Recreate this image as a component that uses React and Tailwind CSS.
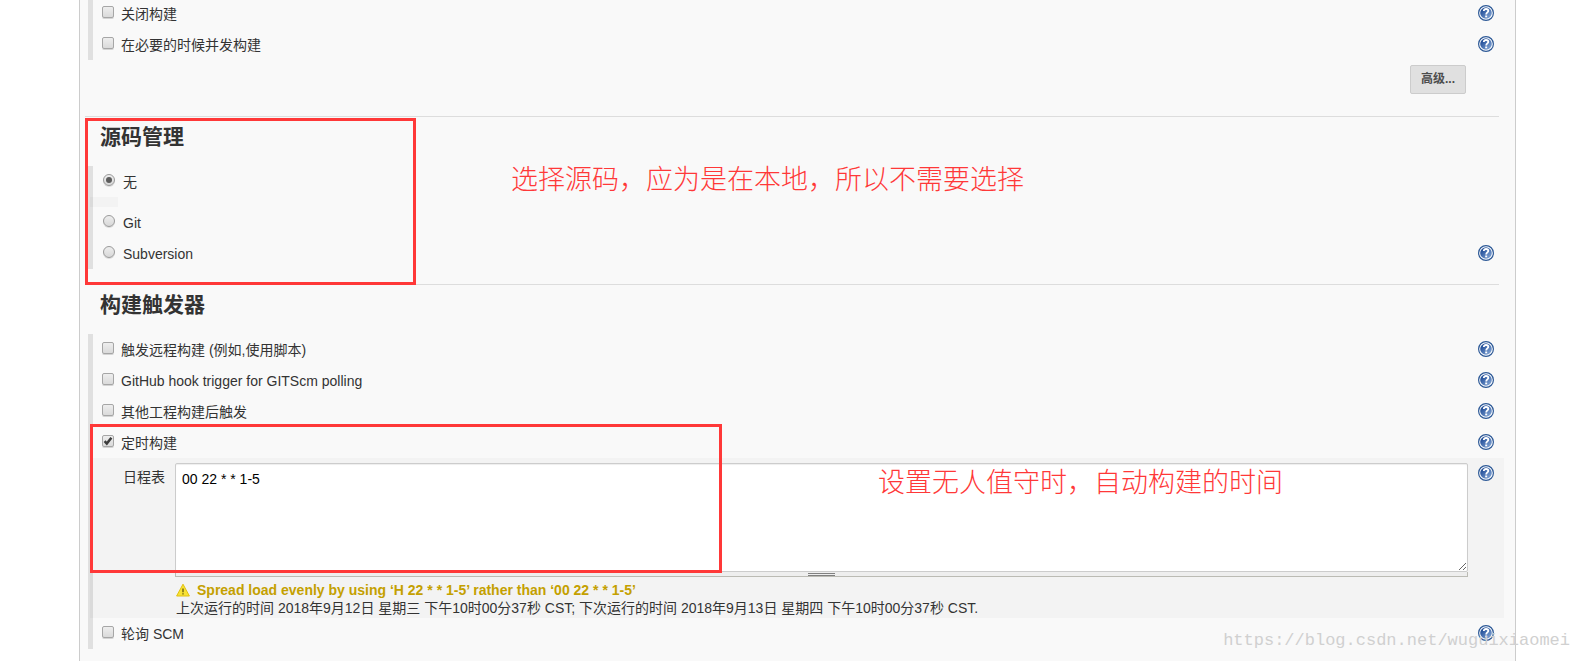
import { useState } from 'react'

const scmOptions = [
  { value: 'none', label: '无' },
  { value: 'git', label: 'Git' },
  { value: 'svn', label: 'Subversion', help: true },
]

function HelpLink({ label }) {
  return (
    <a href="#help" aria-label={`帮助: ${label}`} className="mt-[7px] mr-2.5 ml-auto block size-4 shrink-0">
      <svg viewBox="0 0 16 16" className="size-4">
        <defs>
          <linearGradient id="help-fill" x1="0" y1="0" x2="1" y2="1">
            <stop offset="0.2" stopColor="#24509a" />
            <stop offset="1" stopColor="#8fb0dc" />
          </linearGradient>
        </defs>
        <circle cx="8" cy="8" r="7.4" fill="#fff" stroke="#2c5896" strokeWidth="1.2" />
        <circle cx="8" cy="8" r="5.8" fill="url(#help-fill)" />
        <path d="M5.8 6C5.8 4.6 6.8 4 8 4s2.3.7 2.3 1.9C10.3 7.4 8.2 7.5 8.2 9.5" fill="none" stroke="#fff" strokeWidth="1.8" />
        <rect x="7.2" y="10.5" width="2" height="1.8" fill="#fff" />
      </svg>
    </a>
  )
}

function CheckRow({ id, label, defaultChecked = false, help = true }) {
  const [checked, setChecked] = useState(defaultChecked)

  return (
    <div className="flex h-[31px] items-start pl-[9px]">
      <span className="relative mt-2 size-3 shrink-0">
        <input
          id={id}
          type="checkbox"
          checked={checked}
          onChange={(e) => setChecked(e.target.checked)}
          className="block size-3 appearance-none rounded-xs border border-[#a6a6a6] bg-linear-to-b from-[#eeeeee] to-[#dadada] shadow-[0_1px_0_#d4d4d4]"
        />
        {checked && (
          <svg viewBox="0 0 12 12" className="pointer-events-none absolute inset-0 size-3">
            <path d="M2.6 6.2 4.8 8.6 9.4 2.8" fill="none" stroke="#3c3c3c" strokeWidth="2.5" />
          </svg>
        )}
      </span>
      <label htmlFor={id} className="ml-[7px] leading-8">{label}</label>
      {help && <HelpLink label={label} />}
    </div>
  )
}

function RadioRow({ option, checked, onSelect }) {
  const id = `scm-${option.value}`

  return (
    <div className="flex h-[31px] items-start pl-2.5">
      <span className="relative mt-2 size-3 shrink-0">
        <input
          id={id}
          type="radio"
          name="scm"
          checked={checked}
          onChange={() => onSelect(option.value)}
          className="block size-3 appearance-none rounded-full border border-[#9a9a9a] bg-linear-to-b from-[#eeeeee] to-[#d8d8d8] shadow-[0_1px_0_#dddddd]"
        />
        {checked && <span className="pointer-events-none absolute inset-[3px] rounded-full bg-[#5c5c5c]" />}
      </span>
      <label htmlFor={id} className="ml-2 leading-8">{option.label}</label>
      {option.help && <HelpLink label={option.label} />}
    </div>
  )
}

function SectionTitle({ children }) {
  return <h2 className="mb-[9px] pl-5 text-[21px] leading-10 font-bold">{children}</h2>
}

function FormBlock({ children }) {
  return <div className="mr-[11px] ml-2 border-l-[5px] border-[#e0e0e0]">{children}</div>
}

function Note({ className, children }) {
  return (
    <p className={`pointer-events-none absolute z-10 text-[27px] leading-10 font-light whitespace-nowrap text-[#ff3838] ${className}`}>
      {children}
    </p>
  )
}

function WarningIcon() {
  return (
    <svg viewBox="0 0 14 14" className="mr-[7px] ml-px size-3.5 shrink-0">
      <path d="M7 1.2 13.4 13H.6Z" fill="#f8e234" stroke="#e0c010" strokeLinejoin="round" />
      <path d="M7 5.5v3.7M7 10.2v1.3" stroke="#6b5f10" strokeWidth="1.4" />
    </svg>
  )
}

export default function App() {
  const [scm, setScm] = useState('none')
  const [schedule, setSchedule] = useState('00 22 * * 1-5')

  return (
    <div className="relative flex min-h-screen overflow-hidden bg-white font-['Liberation_Sans','Noto_Sans_CJK_SC',sans-serif] text-sm text-[#333333]">
      <main className="mr-[66px] ml-[79px] min-w-0 flex-1 border-x border-[#cccccc] bg-[#f9f9f9]">
        {/* General options */}
        <section className="-mt-0.5">
          <FormBlock>
            <CheckRow id="disable" label="关闭构建" />
            <CheckRow id="concurrent" label="在必要的时候并发构建" />
          </FormBlock>
          <div className="mt-[5px] mr-[49px] mb-[22px] flex justify-end">
            <button
              type="button"
              className="h-[29px] w-14 rounded-xs border border-[#cccccc] bg-[#e0e0e0] pb-0.5 text-xs font-bold text-[#4d4d4d]"
            >
              高级...
            </button>
          </div>
        </section>

        <hr className="mr-4 ml-[5px] border-[#dddddd]" />

        {/* Source code management */}
        <section className="relative pb-[15px]">
          <SectionTitle>源码管理</SectionTitle>
          <FormBlock>
            {scmOptions.map((option, index) => (
              <div key={option.value}>
                <RadioRow option={option} checked={scm === option.value} onSelect={setScm} />
                {index === 0 && <div className="-ml-[3px] h-2.5 w-7 bg-black/[0.025]" />}
              </div>
            ))}
          </FormBlock>
          <div className="pointer-events-none absolute top-px left-[5px] z-10 h-[167px] w-[331px] border-3 border-[#ff3838]" />
          <Note className="top-[43px] left-[431px]">选择源码，应为是在本地，所以不需要选择</Note>
        </section>

        <hr className="mr-4 ml-[5px] border-[#dddddd]" />

        {/* Build triggers */}
        <section className="relative">
          <SectionTitle>构建触发器</SectionTitle>
          <FormBlock>
            <CheckRow id="remote" label="触发远程构建 (例如,使用脚本)" />
            <CheckRow id="github" label="GitHub hook trigger for GITScm polling" />
            <CheckRow id="upstream" label="其他工程构建后触发" />
            <CheckRow id="timer" label="定时构建" defaultChecked />

            <div className="-ml-[3px] flex items-start bg-black/[0.025] pb-px">
              <label htmlFor="schedule" className="w-[85px] shrink-0 pt-[3px] pl-[33px] leading-8">日程表</label>
              <div className="min-w-0 flex-1 pt-[5px]">
                <textarea
                  id="schedule"
                  value={schedule}
                  onChange={(e) => setSchedule(e.target.value)}
                  className="block h-[109px] w-full resize rounded-xs border border-[#cccccc] bg-white px-1.5 py-[5px] leading-5 text-black shadow-[inset_0_1px_1px_#eeeeee]"
                />
                <div className="flex h-[5px] items-center justify-center border-x border-b border-[#bbbbb4] bg-[#eeeeee]">
                  <span className="h-[3px] w-[27px] border-y border-[#808080]" />
                </div>
                <p className="mt-1 flex items-center leading-[18px] font-bold text-[#c4a000]">
                  <WarningIcon />
                  Spread load evenly by using ‘H 22 * * 1-5’ rather than ‘00 22 * * 1-5’
                </p>
                <p className="pl-px leading-[18px]">
                  上次运行的时间 2018年9月12日 星期三 下午10时00分37秒 CST; 下次运行的时间 2018年9月13日 星期四 下午10时00分37秒 CST.
                </p>
              </div>
              <div className="w-9 shrink-0 pl-2.5">
                <HelpLink label="日程表" />
              </div>
            </div>

            <CheckRow id="poll" label="轮询 SCM" />
          </FormBlock>
          <div className="pointer-events-none absolute top-[139px] left-2.5 z-10 h-[149px] w-[632px] border-3 border-[#ff3838]" />
          <Note className="top-[178px] left-[798px]">设置无人值守时，自动构建的时间</Note>
        </section>
      </main>

      <p className="pointer-events-none absolute right-3 bottom-2.5 font-['Liberation_Mono',monospace] text-[17px] leading-5 text-[#d0d0d0]">
        https://blog.csdn.net/wuguixiaomei
      </p>
    </div>
  )
}
